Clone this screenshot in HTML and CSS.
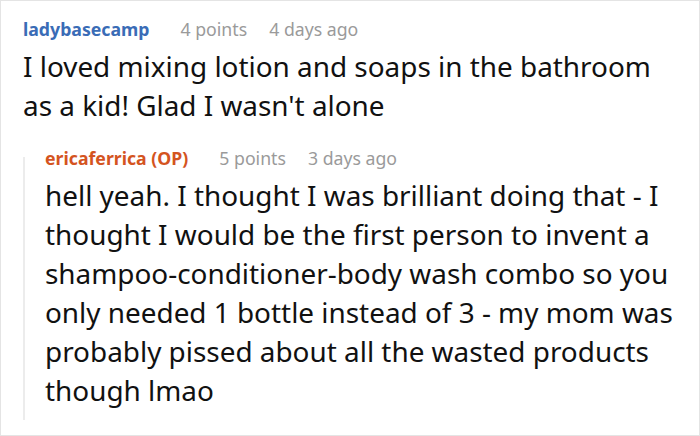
FILE: index.html
```html
<!DOCTYPE html>
<html>
<head>
<meta charset="utf-8">
<link rel="stylesheet" href="styles.css">
</head>
<body>
<div class="frame">
  <div class="comment">
    <div class="meta">
      <span class="author">ladybasecamp</span>
      <span class="info">4 points</span>
      <span class="info">4 days ago</span>
    </div>
    <p class="body">I loved mixing lotion and soaps in the bathroom as a kid! Glad I wasn't alone</p>
    <div class="reply">
      <div class="meta">
        <span class="author op">ericaferrica (OP)</span>
        <span class="info">5 points</span>
        <span class="info">3 days ago</span>
      </div>
      <p class="body">hell yeah. I thought I was brilliant doing that - I thought I would be the first person to invent a shampoo-conditioner-body wash combo so you only needed 1 bottle instead of 3 - my mom was probably pissed about all the wasted products though lmao</p>
    </div>
  </div>
</div>
</body>
</html>
```

FILE: styles.css
```css
html, body {
  margin: 0;
  padding: 0;
  background: #fff;
}
body {
  font-family: "Noto Sans", "DejaVu Sans", sans-serif;
  color: #111;
}
.frame {
  width: 700px;
  height: 436px;
  box-sizing: border-box;
  border: 1px solid #e4e4e4;
  overflow: hidden;
}
.comment {
  padding: 15px 0 0 22px;
}
.meta {
  display: flex;
  align-items: baseline;
  gap: 22px;
  font-size: 17.7px;
  line-height: 26px;
}
.author {
  font-weight: bold;
  color: #3a6cb6;
  margin-right: 9px;
}
.author.op {
  color: #d4541f;
}
.info {
  color: #9a9a9a;
}
.body {
  margin: 5px 0 0;
  font-size: 27.9px;
  line-height: 39px;
  padding-right: 32px;
}
.reply {
  position: relative;
  margin-top: 20px;
  padding-left: 22px;
}
.reply .body {
  padding-right: 0;
}
.reply::before {
  content: "";
  position: absolute;
  left: 0;
  top: 12px;
  bottom: -10px;
  width: 2px;
  background: #ececec;
}
```
